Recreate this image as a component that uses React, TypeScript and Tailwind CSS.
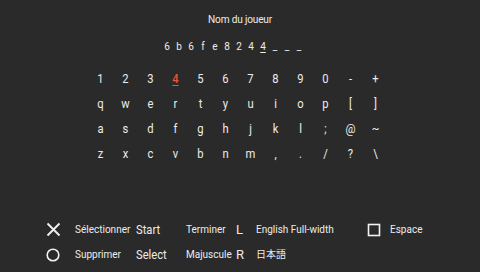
import React from 'react';

const nameChars = ['6', 'b', '6', 'f', 'e', '8', '2', '4', '4', '_', '_', '_'];

const keys = [
  ['1', '2', '3', '4', '5', '6', '7', '8', '9', '0', '-', '+'],
  ['q', 'w', 'e', 'r', 't', 'y', 'u', 'i', 'o', 'p', '[', ']'],
  ['a', 's', 'd', 'f', 'g', 'h', 'j', 'k', 'l', ';', '@', '~'],
  ['z', 'x', 'c', 'v', 'b', 'n', 'm', ',', '.', '/', '?', '\\'],
];

const font = { fontFamily: 'Roboto, "Noto Sans CJK JP", sans-serif' };

const CrossIcon = () => (
  <svg width="15" height="15" viewBox="0 0 15 15">
    <path d="M1.5 1.5 L13.5 13.5 M13.5 1.5 L1.5 13.5" stroke="#f2f2f2" strokeWidth="1.8" fill="none" />
  </svg>
);

const CircleIcon = () => (
  <svg width="14" height="14" viewBox="0 0 14 14">
    <circle cx="7" cy="7" r="5.8" stroke="#f2f2f2" strokeWidth="1.6" fill="none" />
  </svg>
);

const SquareIcon = () => (
  <svg width="14" height="14" viewBox="0 0 14 14">
    <rect x="1.5" y="1.5" width="11" height="11" stroke="#f2f2f2" strokeWidth="1.6" fill="none" />
  </svg>
);

export default function App() {
  return (
    <div className="flex h-[272px] w-[480px] flex-col overflow-hidden bg-[#2a2a2a] text-[#ececec]" style={font}>
      <div className="pt-[13px] text-center text-[11px] leading-[14px] tracking-[-0.2px] [transform:scaleX(0.92)]">Nom du joueur</div>

      <div className="mt-[13px] flex h-[14px] pl-[161px]">
        {nameChars.map((c, i) => (
          <span
            key={i}
            className={`flex w-[12px] justify-center text-[10px] leading-[14px] ${i === 8 ? 'underline underline-offset-[2px]' : ''}`}
          >
            {c}
          </span>
        ))}
      </div>

      <div className="mt-[12px] ml-[88px] grid w-[300px] grid-cols-12">
        {keys.flat().map((k, i) => (
          <span
            key={i}
            className={`flex h-[25px] items-center justify-center text-[13px] [transform:scaleX(0.86)] ${
              i === 3 ? 'font-medium text-[#e8553b] underline underline-offset-[2px]' : ''
            }`}
          >
            {k}
          </span>
        ))}
      </div>

      <div className="mt-[51px] grid grid-cols-[46px_29px_61px_50px_50px_20px_111px_23px_1fr] grid-rows-[25px_25px] items-center">
        <span />
        <span className="flex"><CrossIcon /></span>
        <span className="text-[10px]">Sélectionner</span>
        <span className="origin-left text-[13px] [transform:scaleX(0.86)]">Start</span>
        <span className="text-[10px]">Terminer</span>
        <span className="text-[13px]">L</span>
        <span className="text-[10px]">English Full-width</span>
        <span className="flex"><SquareIcon /></span>
        <span className="text-[10px]">Espace</span>

        <span />
        <span className="flex"><CircleIcon /></span>
        <span className="text-[10px]">Supprimer</span>
        <span className="origin-left text-[13px] [transform:scaleX(0.86)]">Select</span>
        <span className="text-[10px]">Majuscule</span>
        <span className="text-[13px]">R</span>
        <span className="text-[10px]">日本語</span>
        <span />
        <span />
      </div>
    </div>
  );
}
